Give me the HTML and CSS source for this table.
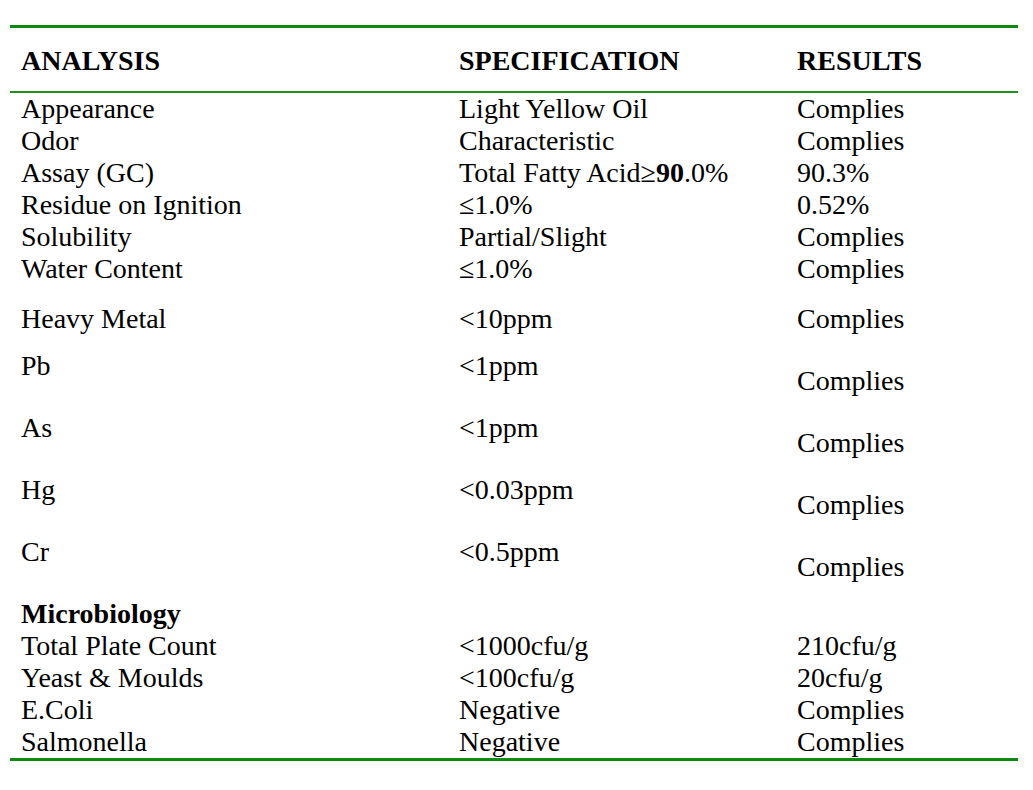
FILE: index.html
```html
<!DOCTYPE html>
<html>
<head>
<meta charset="utf-8">
<link rel="stylesheet" href="styles.css">
</head>
<body>
<div class="sheet">
  <div class="row head">
    <div>ANALYSIS</div><div>SPECIFICATION</div><div>RESULTS</div>
  </div>
  <div class="body">
    <div class="row"><div>Appearance</div><div>Light Yellow Oil</div><div>Complies</div></div>
    <div class="row"><div>Odor</div><div>Characteristic</div><div>Complies</div></div>
    <div class="row"><div>Assay (GC)</div><div>Total Fatty Acid≥<b>90</b>.0%</div><div>90.3%</div></div>
    <div class="row"><div>Residue on Ignition</div><div>≤1.0%</div><div>0.52%</div></div>
    <div class="row"><div>Solubility</div><div>Partial/Slight</div><div>Complies</div></div>
    <div class="row"><div>Water Content</div><div>≤1.0%</div><div>Complies</div></div>
    <div class="row heavy"><div>Heavy Metal</div><div>&lt;10ppm</div><div>Complies</div></div>
    <div class="row metal"><div>Pb</div><div>&lt;1ppm</div><div class="low">Complies</div></div>
    <div class="row metal"><div>As</div><div>&lt;1ppm</div><div class="low">Complies</div></div>
    <div class="row metal"><div>Hg</div><div>&lt;0.03ppm</div><div class="low">Complies</div></div>
    <div class="row metal"><div>Cr</div><div>&lt;0.5ppm</div><div class="low">Complies</div></div>
    <div class="row section"><div class="bold">Microbiology</div><div></div><div></div></div>
    <div class="row"><div>Total Plate Count</div><div>&lt;1000cfu/g</div><div>210cfu/g</div></div>
    <div class="row"><div>Yeast &amp; Moulds</div><div>&lt;100cfu/g</div><div>20cfu/g</div></div>
    <div class="row"><div>E.Coli</div><div>Negative</div><div>Complies</div></div>
    <div class="row"><div>Salmonella</div><div>Negative</div><div>Complies</div></div>
  </div>
</div>
</body>
</html>
```

FILE: styles.css
```css
html, body {
  margin: 0;
  padding: 0;
  background: #ffffff;
}
body {
  font-family: "Liberation Serif", "Times New Roman", serif;
  color: #000000;
  font-size: 28px;
  line-height: 32px;
}
.sheet {
  margin: 25px 0 0 10px;
  width: 1008px;
  border-top: 3px solid #0f8a10;
  border-bottom: 3px solid #0f8a10;
}
.row {
  display: grid;
  grid-template-columns: 438px 338px 1fr;
  padding-left: 11px;
  white-space: nowrap;
}
.head {
  font-weight: bold;
  font-size: 28px;
  padding-top: 17px;
  padding-bottom: 14px;
  border-bottom: 2px solid #1f921f;
}
.heavy {
  margin-top: 18px;
}
.metal {
  margin-top: 15px;
  align-items: start;
}
.metal .low {
  padding-top: 15px;
}
.section {
  margin-top: 15px;
}
.bold {
  font-weight: bold;
}
b {
  font-weight: bold;
}
```
